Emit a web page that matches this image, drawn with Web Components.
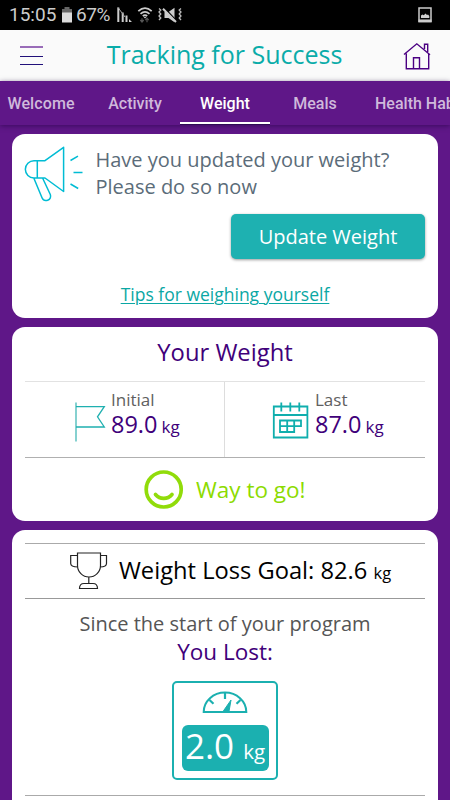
<!DOCTYPE html>
<html lang="en">
<head>
<meta charset="utf-8">
<title>Tracking for Success</title>
<style>
    body {
        margin: 0;
        width: 450px;
        height: 800px;
        overflow: hidden;
        background: #5f1788;
        font-family: "Open Sans", sans-serif;
    }
</style>
</head>
<body>
<tracking-app></tracking-app>

<script>
const icons = {
    battery: { box: "0 0 10 16", svg: `<path d="M2.500 0h5v2h2.500v4h-10v-4h2.500z" fill="#666"/><path d="M0 5.500h10v10H0z" fill="#dcdcdc"/>` },
    signal: { box: "0 0 16 16", svg: `<path d="M.3.500h2V15h-2zM4.700 5.500h2V15h-2zM8.500 8.500h2V15h-2zM12 12l3 3h-3z" fill="#ccc"/><path d="M1 .5 8 10" stroke="#aaa" stroke-width="1" fill="none"/>` },
    wifi: { box: "0 0 16 16", svg: `<g fill="none" stroke="#ccc" stroke-width="1.700"><path d="M1.300 4.200Q8-2 14.700 4.200M3.500 6.800Q8 2.800 12.500 6.800M5.800 9Q8 7.200 10.200 9"/></g><path d="m8 11.500-1.700-1.700h3.400z" fill="#ccc"/><path d="M5 11.200v4M3.300 13l1.700 2 1.700-2M10 15.200v-4M8.300 13.200l1.700-2 1.700 2" stroke="#555" fill="none" stroke-width="1.200"/>` },
    mute: { box: "0 0 24 16", svg: `<path d="M6.500 5h4L16.500.800v14.500L10.500 11h-4z" fill="#ccc"/><path d="M6 .5 19.500 15" stroke="#000" stroke-width="1.500"/><path d="M5 1.800 18 15" stroke="#ccc" stroke-width="2"/><path d="M1 1.500 2.800 3 1 5l1.800 2L1 9l1.800 2L1 13M23 1.500 21.200 3 23 5l-1.800 2L23 9l-1.800 2L23 13" stroke="#bbb" fill="none" stroke-width="1.300"/>` },
    photo: { box: "0 0 14 16", svg: `<path d="M1 1h12v13.500H1z" fill="none" stroke="#ccc" stroke-width="1.500"/><path d="M.500 12.500h13v2.700H.500zM3 11V8.500l1.500-1 1.300.8L7.500 6.500 9 8l1-.5 1.300 1.500V11z" fill="#ccc"/>` },
    house: { box: "403 41 28 30", svg: `<g fill="none" stroke="#4b0082" stroke-width="1.400"><path d="M404 54.500 416.800 43.800 430 54.800M406.300 53.500V68.700H428.700V53.500M413.500 68.500V57.700h6V68.500M424.500 49V44.300h3.200V52"/></g>` },
    megaphone: { box: "24 144 60 60", svg: `<g fill="none" stroke="#00bcd4" stroke-width="1.500" stroke-linejoin="round"><path d="M45 160.700 63.600 147.300V191.500L45 178H34a8.650 8.650 0 0 1 0-17.300zM37.300 160.700V178M34 178.500 42 197.800c1 2.300 3.200 3.300 5.700 2.400 2.600-1 3.500-3.400 2.600-5.700L42.800 178.500"/><path d="m70.500 160.500 7.500-4.300M73.500 172.400h9M70.500 184l7.700 4.500"/></g>` },
    flag: { box: "74 402 34 40", svg: `<path d="M76 402.500V441.500" stroke="#71c9c8" stroke-width="1.700"/><path d="M76 406.700H104.300L97.500 416.800 104.300 427H76" fill="none" stroke="#1fb0b0" stroke-width="1.300"/>` },
    calendar: { box: "272 402 38 38", svg: `<g fill="none" stroke="#0faead" stroke-width="1.800"><path d="M273.800 406.500H307.400V437.500H273.800zM273.800 415H307.400M281.300 402.500v9M290.300 402.500v9M299.300 402.500v9"/><path d="M280 420.500H301V426.200H294.200V432H280zM280 426.200h14.500M287.200 420.500V432M294.200 420.500v6"/></g>` },
    smile: { box: "144 469 40 41", svg: `<g fill="none" stroke="#91dc0a" stroke-width="3.700" stroke-linecap="round"><circle cx="163.700" cy="489.500" r="17.500"/><path d="M155.500 494.500c4.500 5.200 12 5.200 16.500 0"/></g>` },
    trophy: { box: "69 551 40 40", svg: `<g fill="none" stroke="#222" stroke-width="1.200"><path d="M77.500 553H100.500V565.500a11.500 11.500 0 0 1-23 0zM77.500 555.500h-6.800v8c0 2.500 2.500 3.500 7.300 3.500M100.500 555.500h6v8c0 2.500-2.200 3.500-6.500 3.500M88.800 577v6.500M79.500 588.500c0-3.500 2-5 4.500-5h9c2.500 0 4.500 1.500 4.500 5z"/></g>` },
    dial: { box: "202 691 46 24", svg: `<path d="M203.700 712a21.300 19.500 0 0 1 42.600 0z" fill="none" stroke="#1bb0b0" stroke-width="2"/><path d="M225 692.500v6.500M209.500 700l4 3.700M240.500 700l-4 3.700" stroke="#1bb0b0" stroke-width="2.200"/><path d="m223 711.500 8-11.500-2 11.500z" fill="#1bb0b0" stroke="#1bb0b0"/>` }
};

class AppIcon extends HTMLElement {
    constructor() {
        super();
        this.attachShadow({mode: "open"});
    }

    connectedCallback() {
        const icon = icons[this.getAttribute("name")];
        const [, , w, h] = icon.box.split(" ");
        this.shadowRoot.innerHTML = `
        <style>
            :host { display: block; flex: none; width: ${w}px; height: ${h}px; }
            svg { display: block; }
        </style>
        <svg width="${w}" height="${h}" viewBox="${icon.box}" aria-hidden="true">${icon.svg}</svg>
        `;
    }
}
customElements.define("app-icon", AppIcon);

class StatusBar extends HTMLElement {
    constructor() {
        super();
        this.attachShadow({mode: "open"});
        this.shadowRoot.innerHTML = `
        <style>
            :host {
                display: flex;
                align-items: center;
                box-sizing: border-box;
                height: 30px;
                padding: 0 18px 0 9px;
                background: #000;
                color: #ccc;
                font: 19px/30px Roboto, sans-serif;
            }
            .time { width: 53px; }
            .percent { width: 41px; margin-left: 4px; letter-spacing: -0.4px; }
            .wifi { margin-left: 4px; }
            .mute { margin-left: 5px; }
            .photo { margin-left: auto; }
        </style>
        <span class="time">15:05</span>
        <app-icon name="battery"></app-icon>
        <span class="percent">67%</span>
        <app-icon name="signal"></app-icon>
        <app-icon class="wifi" name="wifi"></app-icon>
        <app-icon class="mute" name="mute"></app-icon>
        <app-icon class="photo" name="photo"></app-icon>
        `;
    }
}
customElements.define("status-bar", StatusBar);

class AppHeader extends HTMLElement {
    constructor() {
        super();
        this.attachShadow({mode: "open"});
        this.shadowRoot.innerHTML = `
        <style>
            :host {
                display: flex;
                align-items: center;
                justify-content: space-between;
                box-sizing: border-box;
                height: 51px;
                padding: 0 19px 0 20px;
                background: #fafafa;
            }
            h1 {
                margin: 0 2px 3px 0;
                color: #0aaca9;
                font-size: 25px;
                font-weight: 400;
                line-height: 48px;
            }
            app-icon { margin-top: 1px; }
            .menu {
                display: flex;
                flex-direction: column;
                justify-content: space-between;
                width: 23px;
                height: 19px;
                margin-right: 5px;
            }
            .menu i { height: 1px; background: #21107a; }
            .menu i:first-child { background: #8149a8; height: 2px; opacity: .8; }
        </style>
        <div class="menu"><i></i><i></i><i></i></div>
        <h1><slot></slot></h1>
        <app-icon name="house"></app-icon>
        `;
    }
}
customElements.define("app-header", AppHeader);

class TabItem extends HTMLElement {
    constructor() {
        super();
        this.attachShadow({mode: "open"});
        this.shadowRoot.innerHTML = `
        <style>
            :host {
                display: block;
                flex: none;
                box-sizing: border-box;
                width: 90px;
                height: 43px;
                color: #cfb9db;
                font: 500 16px/45px Roboto, sans-serif;
                text-align: center;
                white-space: nowrap;
            }
            :host([active]) {
                color: #fff;
                border-bottom: 2px solid #fff;
                box-shadow: 0 1px #2f0a55;
            }
            :host([first]) { text-align: left; padding-left: 7.500px; letter-spacing: .1px; }
            :host([last]) { text-align: left; padding-left: 15px; }
        </style>
        <slot></slot>
        `;
    }
}
customElements.define("tab-item", TabItem);

class TabStrip extends HTMLElement {
    constructor() {
        super();
        this.attachShadow({mode: "open"});
        this.shadowRoot.innerHTML = `
        <style>
            :host {
                display: flex;
                height: 44px;
                overflow: hidden;
                background: #5f1788;
                box-shadow: 0 1px 5px rgba(30, 0, 60, .55);
            }
        </style>
        <slot></slot>
        `;
    }
}
customElements.define("tab-strip", TabStrip);

class InfoCard extends HTMLElement {
    constructor() {
        super();
        this.attachShadow({mode: "open"});
        this.shadowRoot.innerHTML = `
        <style>
            :host {
                display: block;
                flex: none;
                box-sizing: border-box;
                padding: 0 13px;
                border-radius: 13px;
                background: #fff;
            }
        </style>
        <slot></slot>
        `;
    }
}
customElements.define("info-card", InfoCard);

class WeightPrompt extends HTMLElement {
    constructor() {
        super();
        this.attachShadow({mode: "open"});
        this.shadowRoot.innerHTML = `
        <style>
            :host { display: flex; flex-direction: column; height: 184px; }
            .message { display: flex; padding-top: 10px; height: 70px; }
            app-icon { margin-left: -1px; }
            p {
                margin: 2px 0 0 11.500px;
                color: #5b6c79;
                font-size: 20px;
                line-height: 27px;
                white-space: nowrap;
            }
            button {
                align-self: flex-end;
                width: 194px;
                height: 45px;
                padding: 0;
                border: 0;
                border-radius: 5px;
                background: #1eb1b1;
                box-shadow: 0 1px 3px rgba(0, 0, 0, .4);
                color: #fff;
                font: 20px/45px "Open Sans", sans-serif;
            }
            a {
                align-self: center;
                margin-top: 23px;
                color: #0aa7a4;
                font-size: 17.500px;
                line-height: 25px;
                text-decoration: underline;
                text-decoration-thickness: 1px;
                text-underline-offset: 2px;
            }
        </style>
        <div class="message">
            <app-icon name="megaphone"></app-icon>
            <p>Have you updated your weight?<br>Please do so now</p>
        </div>
        <button>Update Weight</button>
        <a href="#">Tips for weighing yourself</a>
        `;
    }
}
customElements.define("weight-prompt", WeightPrompt);

class WeightReading extends HTMLElement {
    constructor() {
        super();
        this.attachShadow({mode: "open"});
    }

    connectedCallback() {
        this.shadowRoot.innerHTML = `
        <style>
            :host { display: flex; box-sizing: border-box; height: 75px; padding-top: 20px; }
            .text { margin: -14px 0 0 var(--gap); }
            .label { color: #606060; font-size: 17px; line-height: 23px; }
            .value {
                color: #40007a;
                font-size: 23.500px;
                line-height: 27px;
                white-space: nowrap;
                word-spacing: -2px;
            }
            small { font-size: 17px; }
        </style>
        <app-icon name="${this.getAttribute("icon")}"></app-icon>
        <div class="text">
            <div class="label">${this.getAttribute("label")}</div>
            <div class="value">${this.getAttribute("value")} <small>kg</small></div>
        </div>
        `;
    }
}
customElements.define("weight-reading", WeightReading);

class WeightSummary extends HTMLElement {
    constructor() {
        super();
        this.attachShadow({mode: "open"});
        this.shadowRoot.innerHTML = `
        <style>
            :host { display: block; height: 194px; }
            h2 {
                margin: 0;
                height: 54px;
                color: #40007a;
                font-size: 23.800px;
                font-weight: 400;
                line-height: 51px;
                text-align: center;
            }
            .readings {
                display: grid;
                grid-template-columns: 200px 200px;
                border-top: 1px solid #e2e2e2;
                border-bottom: 1px solid #b0b0b0;
            }
            weight-reading:first-child {
                --gap: 3px;
                padding-left: 49px;
                border-right: 1px solid #ddd;
            }
            weight-reading:last-child { --gap: 5px; padding-left: 47px; }
            .praise {
                display: flex;
                align-items: center;
                height: 62px;
                padding-left: 119px;
                gap: 12px;
                color: #8cdb00;
                font-size: 22.500px;
            }
        </style>
        <h2>Your Weight</h2>
        <div class="readings">
            <weight-reading icon="flag" label="Initial" value="89.0"></weight-reading>
            <weight-reading icon="calendar" label="Last" value="87.0"></weight-reading>
        </div>
        <div class="praise"><app-icon name="smile"></app-icon><span>Way to go!</span></div>
        `;
    }
}
customElements.define("weight-summary", WeightSummary);

class WeightGoal extends HTMLElement {
    constructor() {
        super();
        this.attachShadow({mode: "open"});
        this.shadowRoot.innerHTML = `
        <style>
            :host { display: block; height: 300px; padding-top: 13px; }
            .goal {
                display: flex;
                align-items: center;
                height: 54px;
                padding-left: 44px;
                gap: 10px;
                border-top: 1px solid #aaa;
                border-bottom: 1px solid #999;
                color: #000;
                font-size: 23.700px;
                white-space: nowrap;
            }
            .goal span { margin-bottom: 3px; }
            .goal small { font-size: 16.500px; }
            .since { margin-top: 11px; color: #555; font-size: 20px; line-height: 27px; text-align: center; }
            .lost { color: #40007a; font-size: 22.500px; line-height: 30px; text-align: center; }
            .scale {
                display: flex;
                flex-direction: column;
                align-items: center;
                box-sizing: border-box;
                width: 106px;
                height: 99px;
                margin: 14px auto 15px;
                padding-top: 8px;
                border: 2px solid #1bb0b0;
                border-radius: 5px;
            }
            .reading {
                width: 87px;
                height: 46px;
                margin-top: 10px;
                border-radius: 6px;
                background: #1bb0b0;
                color: #fff;
                font-size: 35px;
                line-height: 42px;
                text-align: center;
                white-space: nowrap;
            }
            .reading small { font-size: 20.500px; }
            .rule { height: 1px; background: #aaa; }
        </style>
        <div class="goal">
            <app-icon name="trophy"></app-icon>
            <span>Weight Loss Goal: 82.6 <small>kg</small></span>
        </div>
        <div class="since">Since the start of your program</div>
        <div class="lost">You Lost:</div>
        <div class="scale">
            <app-icon name="dial"></app-icon>
            <div class="reading">2.0 <small>kg</small></div>
        </div>
        <div class="rule"></div>
        `;
    }
}
customElements.define("weight-goal", WeightGoal);

class TrackingApp extends HTMLElement {
    constructor() {
        super();
        this.attachShadow({mode: "open"});
        this.shadowRoot.innerHTML = `
        <style>
            :host { display: block; height: 800px; overflow: hidden; }
            main { display: flex; flex-direction: column; gap: 9px; padding: 9px 12px 0; }
        </style>
        <status-bar></status-bar>
        <app-header>Tracking for Success</app-header>
        <tab-strip>
            <tab-item first>Welcome</tab-item>
            <tab-item>Activity</tab-item>
            <tab-item active>Weight</tab-item>
            <tab-item>Meals</tab-item>
            <tab-item last>Health Habits</tab-item>
        </tab-strip>
        <main>
            <info-card><weight-prompt></weight-prompt></info-card>
            <info-card><weight-summary></weight-summary></info-card>
            <info-card><weight-goal></weight-goal></info-card>
        </main>
        `;
    }
}
customElements.define("tracking-app", TrackingApp);
</script>
</body>
</html>
